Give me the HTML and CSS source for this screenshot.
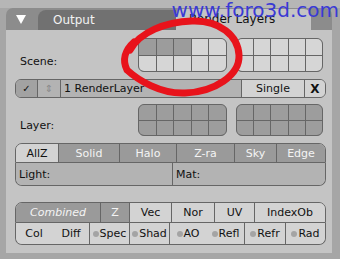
FILE: index.html
```html
<!DOCTYPE html>
<html lang="en">
<head>
    <meta charset="UTF-8">
    <title>Render Layers</title>
    <link rel="stylesheet" href="styles.css">
</head>
<body>

    <div class="screen">
        <div class="panel">
            <!-- Header tabs -->
            <div class="header">
                <span class="arrow"></span>
                <div class="tab tab-out">Output</div>
                <div class="tab tab-on">Render Layers</div>
            </div>

            <div class="body">
                <!-- Scene layers -->
                <div class="row row-scene">
                    <span class="label">Scene:</span>
                    <div class="layers scene-layers g1">
                        <i class="on"></i><i class="on"></i><i class="on"></i><i></i><i></i>
                        <i></i><i></i><i></i><i></i><i></i>
                    </div>
                    <div class="layers scene-layers g2">
                        <i></i><i></i><i></i><i></i><i></i>
                        <i></i><i></i><i></i><i></i><i></i>
                    </div>
                </div>

                <!-- Render layer name -->
                <div class="strip row-rl">
                    <div class="btn check">&#10003;</div>
                    <div class="btn updown">&#8661;</div>
                    <div class="btn name">1 RenderLayer</div>
                    <div class="btn light single">Single</div>
                    <div class="btn light close">X</div>
                </div>

                <!-- Layer buttons -->
                <div class="row row-layer">
                    <span class="label">Layer:</span>
                    <div class="layers layer-layers g1">
                        <i></i><i></i><i></i><i></i><i></i>
                        <i></i><i></i><i></i><i></i><i></i>
                    </div>
                    <div class="layers layer-layers g2">
                        <i></i><i></i><i></i><i></i><i></i>
                        <i></i><i></i><i></i><i></i><i></i>
                    </div>
                </div>

                <!-- Render options -->
                <div class="options">
                    <div class="strip tabs">
                        <div class="btn light w42">AllZ</div>
                        <div class="btn dark w61">Solid</div>
                        <div class="btn dark w57">Halo</div>
                        <div class="btn dark w58">Z-ra</div>
                        <div class="btn dark w42">Sky</div>
                        <div class="btn dark last">Edge</div>
                    </div>
                    <div class="strip fields">
                        <div class="btn field w156">Light:</div>
                        <div class="btn field last">Mat:</div>
                    </div>
                </div>

                <!-- Passes -->
                <div class="passes">
                    <div class="strip pass-top">
                        <div class="btn dark combined w84">Combined</div>
                        <div class="btn dark w29">Z</div>
                        <div class="btn light w42">Vec</div>
                        <div class="btn light w43">Nor</div>
                        <div class="btn light w40">UV</div>
                        <div class="btn light last">IndexOb</div>
                    </div>
                    <div class="strip pass-bottom">
                        <div class="btn light w36">Col</div>
                        <div class="btn light w37 nosep">Diff</div>
                        <div class="btn light w40"><b class="dot"></b>Spec</div>
                        <div class="btn light w40"><b class="dot"></b>Shad</div>
                        <div class="btn light w37"><b class="dot"></b>AO</div>
                        <div class="btn light w38 nosep"><b class="dot"></b>Refl</div>
                        <div class="btn light w41"><b class="dot"></b>Refr</div>
                        <div class="btn light last"><b class="dot"></b>Rad</div>
                    </div>
                </div>
            </div>

            <!-- Red marker loop -->
            <svg class="ring" width="340" height="110" viewBox="0 0 340 110">
                <path d="M130 50 C140 32, 165 22, 192 21 C220 20, 238 36, 239 55 C240 75, 215 92, 185 93 C160 94, 138 80, 127 70 C122 60, 125 50, 134 42"
                      fill="none" stroke="#e8131b" stroke-width="7" stroke-linecap="round"/>
            </svg>
        </div>

        <div class="watermark">www.foro3d.com</div>
    </div>

</body>
</html>
```

FILE: styles.css
```css
/* General */
body {
    margin: 0;
    background: #a6a6a6;
    font-family: "DejaVu Sans", sans-serif;
    font-size: 11px;
    color: #111;
}
.screen {
    position: relative;
    width: 340px;
    height: 259px;
    overflow: hidden;
    background: linear-gradient(#b6b6b6 0, #b6b6b6 8px, #a6a6a6 8px);
}
.panel {
    position: relative;
    margin-left: 6px;
    padding-top: 8px;
    width: 326px;
}
/* Header */
.header {
    display: flex;
    align-items: flex-end;
    height: 22px;
    background: #8c8c8c;
    border-radius: 7px 7px 0 0;
}
.arrow {
    width: 0;
    height: 0;
    margin: 0 12px 6px 10px;
    border-left: 5px solid transparent;
    border-right: 5px solid transparent;
    border-top: 9px solid #fff;
}
.tab {
    height: 20px;
    line-height: 20px;
    font-size: 12px;
}
.tab-out {
    width: 138px;
    background: #717171;
    color: #f2f2f2;
    border-radius: 8px 0 0 0;
    padding-left: 15px;
    box-sizing: border-box;
}
.tab-on {
    width: 135px;
    height: 21px;
    background: #c4c4c4;
    border-radius: 7px 7px 0 0;
    padding-left: 13px;
    box-sizing: border-box;
}
/* Body */
.body {
    background: #c4c4c4;
    padding: 8px 6px 8px 9px;
    height: 207px;
}
.row {
    display: flex;
    align-items: flex-end;
}
.label {
    width: 118px;
    padding-left: 5px;
}
.row-scene .label { padding-bottom: 4px; }
.row-layer .label { padding-bottom: 4px; }
.row-rl { margin-top: 7px; }
.row-layer { margin-top: 6px; }
/* Layer grids */
.layers {
    display: grid;
    grid-template-columns: repeat(5, 1fr);
    grid-template-rows: 1fr 1fr;
    border: 1px solid #666;
    border-radius: 6px;
    overflow: hidden;
    box-sizing: border-box;
    background: #666;
    gap: 1px;
}
.layers.g1 { width: 89px; }
.layers.g2 { width: 87px; margin-left: 9px; }
.scene-layers { height: 34px; }
.scene-layers i { background: #d6d6d6; }
.scene-layers i.on { background: #9c9c9c; }
.layer-layers { height: 32px; }
.layer-layers i { background: #9d9d9d; }
/* Button strips */
.strip {
    display: flex;
    width: 311px;
    box-sizing: border-box;
    border: 1px solid #666;
    overflow: hidden;
}
.btn {
    flex: none;
    display: flex;
    align-items: center;
    justify-content: center;
    border-left: 1px solid #666;
    box-sizing: border-box;
    white-space: nowrap;
}
.btn:first-child { border-left: none; }
.btn.nosep { border-left-color: transparent; }
.btn.last { flex: 1; }
.light { background: #d3d3d3; color: #111; }
.dark { background: #9a9a9a; color: #f4f4f4; }
.field { background: #b3b3b3; justify-content: flex-start; padding-left: 3px; }
/* Render layer row */
.row-rl {
    height: 19px;
    border-radius: 6px;
}
.check { width: 21px; background: #a2a2a2; font-size: 10px; }
.updown { width: 23px; background: #b3b3b3; color: #8a8a8a; font-size: 10px; }
.name { width: 181px; background: #b3b3b3; justify-content: flex-start; padding-left: 3px; }
.single { width: 63px; }
.close { flex: 1; font-weight: bold; font-size: 12px; }
/* Options */
.options { margin-top: 7px; }
.tabs {
    height: 20px;
    border-radius: 7px 7px 0 0;
}
.fields {
    height: 23px;
    border-top: none;
    border-radius: 0 0 7px 7px;
}
/* Passes */
.passes { margin-top: 16px; }
.pass-top {
    height: 21px;
    border-radius: 7px 7px 0 0;
}
.pass-bottom {
    height: 22px;
    border-top: none;
    border-radius: 0 0 7px 7px;
}
.combined { font-style: italic; }
.dot {
    display: inline-block;
    width: 6px;
    height: 6px;
    border-radius: 50%;
    background: #a4a4a4;
    margin-right: 1px;
}
/* Widths */
.w29 { width: 29px; }
.w36 { width: 36px; }
.w37 { width: 37px; }
.w38 { width: 38px; }
.w40 { width: 40px; }
.w41 { width: 41px; }
.w42 { width: 42px; }
.w43 { width: 43px; }
.w57 { width: 57px; }
.w58 { width: 58px; }
.w61 { width: 61px; }
.w84 { width: 84px; }
.w156 { width: 156px; }
/* Overlays */
.ring {
    position: absolute;
    left: -6px;
    top: 0;
    pointer-events: none;
}
.watermark {
    position: absolute;
    right: 1px;
    top: -2px;
    font-family: "DejaVu Sans", sans-serif;
    font-size: 20px;
    color: #3a3ad4;
}
```
